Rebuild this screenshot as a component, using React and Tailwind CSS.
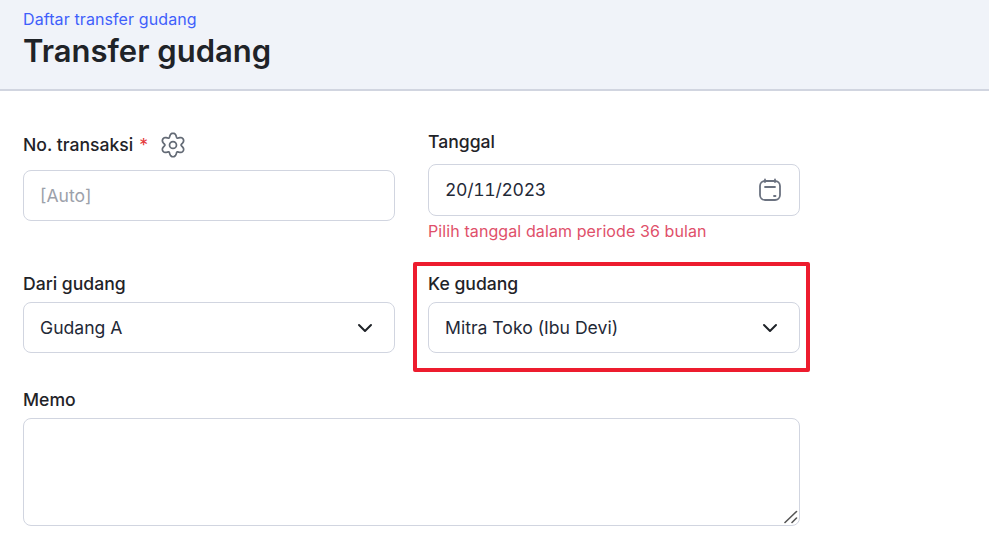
import { ChevronDown } from "lucide-react";

// six rounded lobes, same outline as the reference gear
const gearPath =
  Array.from({ length: 145 }, (_, i) => {
    const t = (i / 144) * Math.PI * 2;
    const r = 9.4 + 1.7 * Math.cos(6 * t) - 0.25 * Math.cos(12 * t);
    const x = 12 + r * Math.sin(t);
    const y = 12 - r * Math.cos(t);
    return `${i === 0 ? "M" : "L"}${x.toFixed(2)} ${y.toFixed(2)}`;
  }).join(" ") + "Z";

const GearIcon = () => (
  <svg width="26" height="26" viewBox="0 0 24 24" fill="none" stroke="#636a75" strokeWidth="1.6" strokeLinejoin="round">
    <path d={gearPath} />
    <circle cx="12" cy="12" r="3.2" />
  </svg>
);

const CalendarIcon = () => (
  <svg width="24" height="24" viewBox="0 0 24 24" fill="none" stroke="#6b7280" strokeWidth="1.8" strokeLinecap="round">
    <rect x="2" y="3" width="20" height="19" rx="5" />
    <path d="M7 1.5v2.5M17 1.5v2.5M7 9h10" />
    <path d="M16 18h1.5" />
  </svg>
);

const SelectBox = ({ value }) => (
  <div className="h-[51px] flex items-center justify-between pl-[16px] pr-[20px] border border-[#d1d5e0] rounded-lg bg-white">
    <span className="mt-[1px] text-[17.6px] text-[#1f2937]">{value}</span>
    <ChevronDown size={24} strokeWidth={2} className="text-[#1f2328] mr-[-3px]" />
  </div>
);

export default function App() {
  return (
    <div className="min-h-[543px] bg-white font-['Inter',sans-serif] text-[#1f2328] overflow-hidden">
      {/* Header */}
      <div className="h-[91px] bg-[#f0f3f9] border-b-2 border-[#d1d5e0] pl-[23px] pt-[9px]">
        <a className="block text-[16px] leading-[20px] tracking-[0.1px] text-[#3f5ffb]">Daftar transfer gudang</a>
        <h1 className="mt-[3px] text-[31px] leading-[38px] font-semibold">Transfer gudang</h1>
      </div>

      <div className="pl-[23px] pt-[38px] w-[800px]">
        <div className="grid grid-cols-[372px_372px] gap-x-[33px]">
          {/* No. transaksi */}
          <div className="h-[143px]">
            <div className="flex items-center h-[30px] mt-[1px] mb-[10px]">
              <span className="text-[17.6px] font-medium">No. transaksi</span>
              <span className="ml-[6px] text-[17.6px] text-[#e5383b]">*</span>
              <span className="ml-[12px] flex"><GearIcon /></span>
            </div>
            <div className="h-[51px] flex items-center px-[16px] border border-[#d1d5e0] rounded-lg bg-white">
              <span className="mt-[1px] text-[17.6px] text-[#9ca1aa]">[Auto]</span>
            </div>
          </div>

          {/* Tanggal */}
          <div className="h-[143px]">
            <div className="h-[24px] mt-[1px] mb-[10px] flex items-center text-[17.6px] font-medium">Tanggal</div>
            <div className="h-[52px] flex items-center justify-between pl-[16px] pr-[17px] border border-[#d1d5e0] rounded-lg bg-white">
              <span className="text-[17.6px] tabular-nums tracking-[-0.3px] text-[#1f2937]">20/11/2023</span>
              <CalendarIcon />
            </div>
            <p className="mt-[5px] text-[16px] leading-[20px] tracking-[0.1px] text-[#e0506a]">Pilih tanggal dalam periode 36 bulan</p>
          </div>

          {/* Dari gudang */}
          <div className="h-[116px]">
            <div className="h-[24px] flex items-center mb-[6px] text-[17.6px] font-medium">Dari gudang</div>
            <SelectBox value="Gudang A" />
          </div>

          {/* Ke gudang, marked with a red box */}
          <div className="relative h-[116px]">
            <div className="h-[24px] flex items-center mb-[6px] text-[17.6px] font-medium">Ke gudang</div>
            <SelectBox value="Mitra Toko (Ibu Devi)" />
            <div className="absolute left-[-15px] right-[-10px] top-[-10px] h-[110px] border-4 border-[#ed1c2e] rounded-[2px] pointer-events-none"></div>
          </div>
        </div>

        {/* Memo */}
        <div className="h-[24px] flex items-center mb-[6px] text-[17.6px] font-medium">Memo</div>
        <div className="relative w-[777px] h-[108px]">
          <textarea className="block w-full h-full border border-[#d1d5e0] rounded-lg bg-white outline-none resize-none"></textarea>
          {/* resize grip */}
          <svg className="absolute right-[2px] bottom-[2px]" width="14" height="14" viewBox="0 0 14 14" stroke="#555" strokeWidth="1.6" strokeLinecap="round">
            <path d="M1 12.5 12.5 1.5M8 12.5l4.5-4.5" />
          </svg>
        </div>
      </div>
    </div>
  );
}
